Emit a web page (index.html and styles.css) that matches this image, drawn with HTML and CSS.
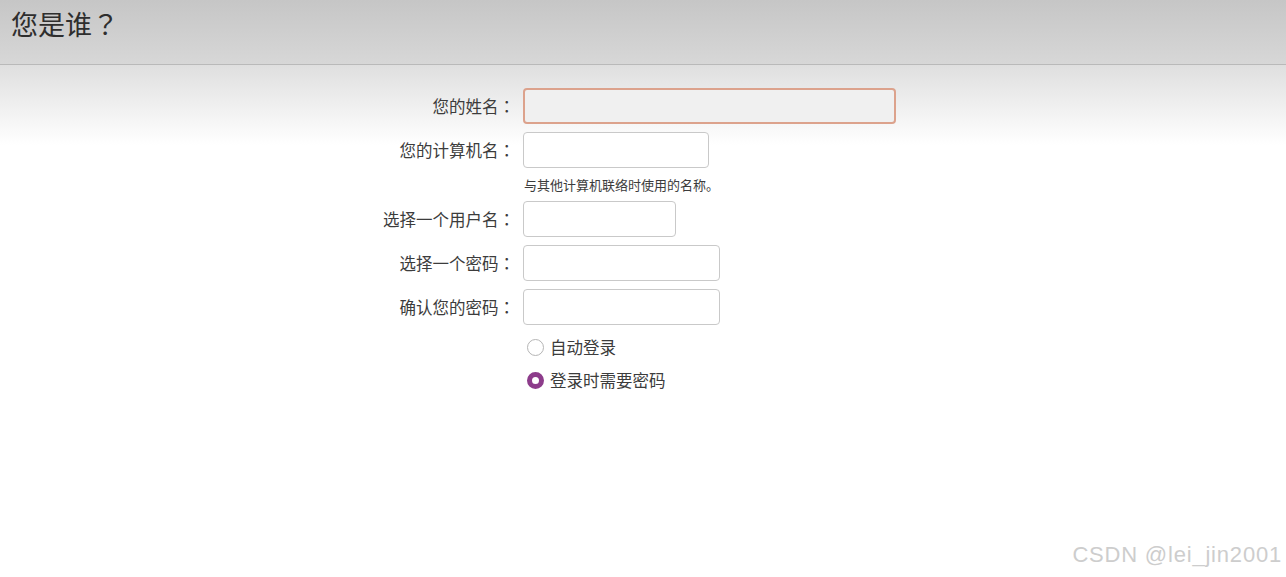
FILE: index.html
```html
<!DOCTYPE html>
<html lang="zh-CN">
<head>
<meta charset="utf-8">
<title>您是谁？</title>
<link rel="stylesheet" href="styles.css">
</head>
<body>
<header class="topbar">
  <h1 class="title">您是谁<span class="punct">？</span></h1>
</header>
<main class="content">
  <form class="form">
    <label class="label" for="name">您的姓名<span class="punct">：</span></label>
    <div class="field"><input id="name" class="input input-focus" style="width:373px"></div>

    <label class="label" for="host">您的计算机名<span class="punct">：</span></label>
    <div class="field"><input id="host" class="input" style="width:186px"></div>

    <div></div>
    <div class="hint">与其他计算机联络时使用的名称。</div>

    <label class="label" for="user">选择一个用户名<span class="punct">：</span></label>
    <div class="field"><input id="user" class="input" style="width:153px"></div>

    <label class="label" for="pw">选择一个密码<span class="punct">：</span></label>
    <div class="field"><input id="pw" class="input" type="password" style="width:197px"></div>

    <label class="label" for="pw2">确认您的密码<span class="punct">：</span></label>
    <div class="field"><input id="pw2" class="input" type="password" style="width:197px"></div>

    <div></div>
    <div class="radios">
      <div class="radio-row"><span class="radio"></span><span class="radio-text">自动登录</span></div>
      <div class="radio-row"><span class="radio radio-on"></span><span class="radio-text">登录时需要密码</span></div>
    </div>
  </form>
</main>
<div class="watermark">CSDN @lei_jin2001</div>
</body>
</html>
```

FILE: styles.css
```css
html, body {
  margin: 0;
  padding: 0;
  background: #ffffff;
  font-family: "Noto Sans CJK SC", "Noto Sans", "DejaVu Sans", sans-serif;
  color: #3c3c3c;
  text-spacing-trim: space-all;
}

body {
  width: 1286px;
  height: 577px;
  overflow: hidden;
  position: relative;
}

.topbar {
  height: 64px;
  background: linear-gradient(to bottom, #c6c6c6 0%, #d7d7d7 100%);
  border-bottom: 1px solid #b9b9b9;
  display: flex;
  align-items: flex-start;
}

.title {
  margin: 0;
  padding: 6px 0 0 11px;
  font-size: 27px;
  font-weight: normal;
  color: #2e2e2e;
  line-height: 36px;
}

.punct {
  display: inline-block;
  width: 1em;
  text-align: center;
  font-family: "Noto Sans CJK TC", "Noto Sans CJK SC", sans-serif;
}

.content {
  background: linear-gradient(to bottom, #dfdfdf 0px, #f3f3f3 50px, #ffffff 80px);
  min-height: 512px;
  padding-top: 23px;
}

.form {
  display: grid;
  grid-template-columns: 515px auto;
  column-gap: 8px;
  row-gap: 8px;
  align-items: center;
}

.label {
  text-align: right;
  font-size: 16.5px;
  line-height: 20px;
  color: #3c3c3c;
  white-space: nowrap;
}

.field {
  display: flex;
}

.input {
  box-sizing: border-box;
  height: 36px;
  border: 1px solid #c9c9c9;
  border-radius: 4px;
  background: #ffffff;
  padding: 0 8px;
  font: inherit;
  outline: none;
}

.input-focus {
  border: 2px solid #dca28c;
  background: #f0f0f0;
}

.hint {
  font-size: 13px;
  line-height: 17px;
  height: 17px;
  color: #3c3c3c;
  margin-left: 1px;
}

.radios {
  display: flex;
  flex-direction: column;
  gap: 13px;
  padding: 4px 0 0 4px;
}

.radio-row {
  display: flex;
  align-items: center;
  gap: 6px;
  height: 20px;
}

.radio {
  box-sizing: border-box;
  width: 17px;
  height: 17px;
  border-radius: 50%;
  border: 1px solid #b5b5b5;
  background: #ffffff;
}

.radio-on {
  border: 5px solid #8d3c8b;
  background: #ffffff;
}

.radio-text {
  font-size: 16.5px;
  color: #3c3c3c;
}

.watermark {
  position: absolute;
  right: 4px;
  bottom: 9px;
  font-family: "Liberation Sans", Arial, sans-serif;
  font-size: 22px;
  letter-spacing: 0.8px;
  color: #cdcdcd;
}
```
